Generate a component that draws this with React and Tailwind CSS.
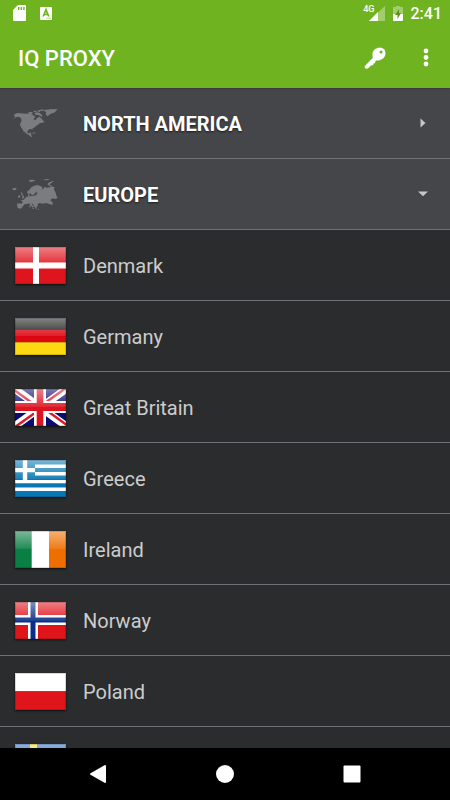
import React, { useState } from 'react';

const CROSS_FLAGS = {
  denmark: { field: '#df151d', cross: '#ffffff', x: 18, y: 15.5, width: 6 },
  norway: { field: '#e0141b', cross: '#ffffff', x: 13, y: 13, width: 10, inner: '#0a2f86' },
  sweden: { field: '#2f6fc4', cross: '#f5dc1e', x: 15, y: 15, width: 7 },
};

function CrossFlag({ name }) {
  const { field, cross, x, y, width, inner } = CROSS_FLAGS[name];
  return (
    <>
      <rect width="51" height="37" fill={field} />
      <rect x={x} width={width} height="37" fill={cross} />
      <rect y={y} width="51" height={width} fill={cross} />
      {inner && <rect x="15.5" width="5" height="37" fill={inner} />}
      {inner && <rect y="15.5" width="51" height="5" fill={inner} />}
    </>
  );
}

function FlagArt({ name }) {
  switch (name) {
    case 'germany':
      return (
        <>
          <rect width="51" height="12.3" fill="#1c1c1c" />
          <rect y="12" width="51" height="12.5" fill="#dd0712" />
          <rect y="24.3" width="51" height="12.7" fill="#fbda12" />
        </>
      );
    case 'britain':
      return (
        <>
          <rect width="51" height="37" fill="#0b0b72" />
          <path d="M0 0L51 37M51 0L0 37" stroke="#fff" strokeWidth="7.5" />
          <path d="M-1 0.8L24 19M52 36.2L27 18M52 -1.8L27 16M-1 38.8L24 21" stroke="#dc1a28" strokeWidth="2.4" />
          <path d="M25 0V37M0 18H51" stroke="#fff" strokeWidth="12" />
          <path d="M25 0V37" stroke="#dc1420" strokeWidth="6.6" />
          <path d="M0 18H51" stroke="#dc1420" strokeWidth="8" />
        </>
      );
    case 'greece':
      return (
        <>
          <rect width="51" height="37" fill="#0878b4" />
          <path d="M20 6.2H51M20 13.7H51M0 21.6H51M0 29.2H51" stroke="#fff" strokeWidth="3.4" />
          <rect width="20" height="20" fill="#0878b4" />
          <path d="M10 0V20M0 10.1H20" stroke="#fff" strokeWidth="4.4" />
        </>
      );
    case 'ireland':
      return (
        <>
          <rect width="17" height="37" fill="#0a7f43" />
          <rect x="16.7" width="17.6" height="37" fill="#fff" />
          <rect x="34" width="17" height="37" fill="#ee6e00" />
        </>
      );
    case 'poland':
      return (
        <>
          <rect width="51" height="18.5" fill="#fff" />
          <rect y="18" width="51" height="19" fill="#df151b" />
        </>
      );
    default:
      return <CrossFlag name={name} />;
  }
}

function Flag({ name }) {
  return (
    <svg width="51" height="37" viewBox="0 0 51 37" className="shadow-[0_1px_2px_rgba(0,0,0,0.7)]" aria-hidden="true">
      <defs>
        <linearGradient id={`gloss-${name}`} x1="0" y1="0" x2="0" y2="1">
          <stop offset="0" stopColor="#fff" stopOpacity="0.46" />
          <stop offset="0.5" stopColor="#fff" stopOpacity="0.08" />
          <stop offset="0.5" stopColor="#fff" stopOpacity="0" />
        </linearGradient>
      </defs>
      <FlagArt name={name} />
      <rect width="51" height="37" fill={`url(#gloss-${name})`} />
      <rect x="0.5" y="0.5" width="50" height="36" fill="none" stroke="#000" strokeOpacity="0.15" />
    </svg>
  );
}

function NorthAmericaMap() {
  return (
    <svg width="46" height="30" viewBox="36 57 138 90" fill="#7b7c80" aria-hidden="true">
      <path d="M36 90L45 85L43 80L41 77L52 72L62 73L78 74L88 73L98 77L103 81L106 86L101 88L102 93L107 92L112 87L117 83L124 88L130 95L133 98L126 101L119 103L113 108L107 112L102 116L97 119L99 125L96 121L90 120L84 124L82 130L86 134L91 130L94 133L93 137L96 142L95 145L88 139L80 135L75 129L73 125L74 132L70 126L67 120L63 115L60 108L62 101L65 94L62 86L56 83L48 85L42 88Z" />
      <path d="M85 70L93 68L99 71L95 75L88 74ZM99 66L108 65L111 69L105 70ZM103 73L111 70L119 72L126 78L128 83L121 82L116 78L108 78ZM111 65L122 62L133 61L129 65L121 66L118 70ZM134 63L151 61L173 60L168 65L165 70L157 73L149 76L143 82L139 79L137 73L139 68L131 67ZM96 132L103 130L107 132L101 134ZM126 100L131 99L130 103Z" />
    </svg>
  );
}

function EuropeMap() {
  return (
    <svg width="46" height="32" viewBox="36 57 138 96" fill="#7b7c80" aria-hidden="true">
      <path d="M51 137L53 133L65 134L68 129L63 123L71 122L78 115L85 112L84 106L88 106L89 112L98 111L108 109L112 103L109 98L104 104L99 109L94 108L92 102L88 105L82 103L81 98L88 93L94 85L103 80L113 78L123 82L128 87L124 92L130 89L134 84L142 86L149 85L154 82L163 84L162 92L167 101L169 110L173 116L167 120L157 118L151 124L158 130L158 138L149 136L139 132L128 134L119 132L112 136L114 141L109 143L111 150L107 149L101 138L94 131L98 140L103 142L98 146L91 138L87 133L81 135L73 136L69 142L64 148L58 149L53 146Z" />
      <path d="M36 89L42 87L50 88L48 92L41 94ZM63 100L67 101L67 106L71 112L73 117L65 119L68 113L64 107ZM54 111L60 108L61 115L55 117ZM86 64L97 62L107 64L100 67L94 69L88 67ZM130 62L141 60L150 61L142 64L133 64ZM142 76L148 70L157 67L162 66L155 71L148 77L156 80L150 82ZM88 139L91 139L91 146L88 145ZM95 148L102 147L101 151ZM112 151L118 150L116 153Z" />
    </svg>
  );
}

const REGIONS = [
  { id: 'na', label: 'NORTH AMERICA', map: <NorthAmericaMap />, countries: [] },
  {
    id: 'eu',
    label: 'EUROPE',
    map: <EuropeMap />,
    countries: [
      { name: 'Denmark', flag: 'denmark' },
      { name: 'Germany', flag: 'germany' },
      { name: 'Great Britain', flag: 'britain' },
      { name: 'Greece', flag: 'greece' },
      { name: 'Ireland', flag: 'ireland' },
      { name: 'Norway', flag: 'norway' },
      { name: 'Poland', flag: 'poland' },
      { name: 'Sweden', flag: 'sweden' },
    ],
  },
];

function StatusBar() {
  return (
    <div className="flex h-7 items-center justify-between pl-3 pr-2">
      <div className="flex items-center gap-3">
        <svg width="16" height="18" viewBox="0 0 16 18" aria-hidden="true">
          <path d="M6 0H13Q14 0 14 1V15Q14 16 13 16H2.500Q1 16 1 15V5Z" fill="#fff" />
          <path d="M6.700 2V5M9.300 2V5M11.900 2V5" stroke="#6fb320" strokeWidth="1.4" />
        </svg>
        <svg width="14" height="16" viewBox="0 0 14 16" aria-hidden="true">
          <rect y="1" width="12" height="13" rx="1" fill="#fff" />
          <path d="M3.200 10.500L6 3.700L8.800 10.500M4.300 8.500H7.700" fill="none" stroke="#6fb320" strokeWidth="1.700" />
          <path d="M6.500 12.200H11" stroke="#6fb320" strokeWidth="1" strokeDasharray="1 1" />
        </svg>
      </div>
      <div className="flex items-center">
        <span className="-mr-1.5 self-start pt-[3px] text-[9px] font-medium leading-3">4G</span>
        <svg width="16" height="16" viewBox="0 0 16 16" aria-hidden="true">
          <path d="M16 0V15H0Z" fill="#fff" fillOpacity="0.35" />
          <path d="M9 6V15H0Z" fill="#fff" />
        </svg>
        <svg width="10" height="16" viewBox="0 0 10 16" className="ml-2 mr-2" aria-hidden="true">
          <path d="M3 0H7V1H10V8H0V1H3Z" fill="#fff" fillOpacity="0.35" />
          <path d="M0 8H10V14Q10 15 9 15H1Q0 15 0 14Z" fill="#fff" />
          <path d="M6 3L2 9H4.500V13L8 7H6Z" fill="#5c941b" />
        </svg>
        <span className="text-base font-medium leading-7">2:41</span>
      </div>
    </div>
  );
}

function CountryRow({ country }) {
  return (
    <li className="border-b border-[#707174]">
      <button type="button" className="flex h-[70px] w-full items-center text-left">
        <span className="w-[83px] shrink-0 pl-[15px]"><Flag name={country.flag} /></span>
        <span className="pt-0.5 text-xl text-[#cccccc]">{country.name}</span>
      </button>
    </li>
  );
}

function RegionGroup({ region, open, onToggle }) {
  return (
    <section>
      <h2 className="border-b border-[#707174] bg-[#454649]">
        <button type="button" aria-expanded={open} onClick={onToggle} className="flex h-[70px] w-full items-center pr-[22px] text-left">
          <span className="w-[83px] shrink-0 pl-3">{region.map}</span>
          <span className="flex-1 pt-0.5 text-xl font-bold text-white [text-shadow:0_1px_2px_#1a1a1e]">{region.label}</span>
          <svg width="10" height="10" viewBox="0 0 10 10" fill="#c6c6c8" aria-hidden="true">
            {open ? <path d="M0 2.500H10L5 7.300Z" /> : <path d="M2.500 0.500L7.500 5L2.500 9.500Z" />}
          </svg>
        </button>
      </h2>
      {open && (
        <ul>
          {region.countries.map(c => <CountryRow key={c.flag} country={c} />)}
        </ul>
      )}
    </section>
  );
}

export default function App() {
  const [openRegion, setOpenRegion] = useState('eu');

  return (
    <div className="flex h-screen flex-col overflow-hidden bg-[#2b2c2e] font-['Roboto',sans-serif]">
      <header className="z-10 shrink-0 bg-[#6fb320] text-white shadow-[0_0_2px_#2c1c34]">
        <StatusBar />
        <div className="flex h-[60px] items-center pl-[18px] pr-3">
          <h1 className="flex-1 text-[22px] font-medium">IQ PROXY</h1>
          <button type="button" aria-label="Access key" className="mr-6 p-1">
            <svg width="22" height="22" viewBox="75 138 66 66" aria-hidden="true">
              <path d="M79 194L102 170Q98 153 108 145Q117 138 128 141Q139 144 139 156Q139 169 128 175Q121 179 112 178L108 182L108 186L103 187L102 192L96 193L88 201Q82 205 78 200Q76 197 79 194Z" fill="#fff" stroke="#fff" strokeWidth="1" />
              <circle cx="126" cy="153" r="4.5" fill="#6fb320" />
            </svg>
          </button>
          <button type="button" aria-label="More options" className="p-2">
            <svg width="8" height="20" viewBox="0 0 8 20" fill="#fff" aria-hidden="true">
              <circle cx="4" cy="3" r="2.400" />
              <circle cx="4" cy="9.500" r="2.400" />
              <circle cx="4" cy="16" r="2.400" />
            </svg>
          </button>
        </div>
      </header>

      <main className="min-h-0 flex-1 overflow-hidden">
        {REGIONS.map(region => (
          <RegionGroup
            key={region.id}
            region={region}
            open={openRegion === region.id}
            onToggle={() => setOpenRegion(openRegion === region.id ? null : region.id)}
          />
        ))}
      </main>

      <nav className="flex h-[52px] shrink-0 items-center justify-center gap-[109px] bg-black">
        <button type="button" aria-label="Back">
          <svg width="18" height="20" viewBox="0 0 18 20" aria-hidden="true">
            <path d="M16 2V18L2 10Z" fill="#fff" stroke="#fff" strokeWidth="2" strokeLinejoin="round" />
          </svg>
        </button>
        <button type="button" aria-label="Home">
          <svg width="18" height="18" viewBox="0 0 18 18" aria-hidden="true">
            <circle cx="9" cy="9" r="9" fill="#fff" />
          </svg>
        </button>
        <button type="button" aria-label="Recent apps">
          <svg width="18" height="18" viewBox="0 0 18 18" aria-hidden="true">
            <rect x="0.500" y="0.500" width="17" height="17" rx="1" fill="#fff" />
          </svg>
        </button>
      </nav>
    </div>
  );
}
